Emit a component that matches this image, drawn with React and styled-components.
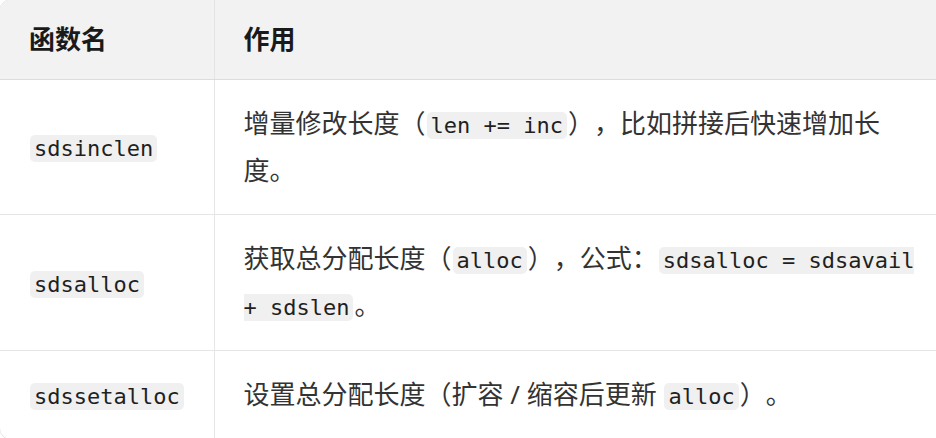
import React from "react";
import styled, { createGlobalStyle } from "styled-components";

const Global = createGlobalStyle`
  html, body {
    margin: 0;
    padding: 0;
    background: #ffffff;
    overflow: hidden;
  }
  body {
    font-family: "Noto Sans", "Noto Sans CJK SC", sans-serif;
  }
`;

const Frame = styled.div`
  width: 955px;
  margin: -1px 0 0 -1px;
  border: 1px solid #e6e6e6;
  border-radius: 12px;
  overflow: hidden;
`;

const Table = styled.table`
  width: 100%;
  border-collapse: collapse;
  table-layout: fixed;
  font-size: 26px;
  line-height: 1.8;
  color: #333333;
  text-spacing-trim: space-all;
  font-feature-settings: "halt" 0, "chws" 0;
`;

const HeadCell = styled.th`
  text-align: left;
  font-weight: 700;
  color: #1a1a1a;
  background: #f2f2f2;
  padding: 16px 29px;
  border-bottom: 1px solid #dcdcdc;
  border-left: ${(p) => (p.$first ? "none" : "1px solid #e4e4e4")};
  width: ${(p) => (p.$first ? "214px" : "auto")};
  box-sizing: border-box;
`;

const Row = styled.tr`
  border-bottom: ${(p) => (p.$last ? "none" : "1px solid #e6e6e6")};
`;

const Cell = styled.td`
  padding: 20px 29px 21px;
  vertical-align: middle;
  border-left: ${(p) => (p.$first ? "none" : "1px solid #e6e6e6")};
`;

const Code = styled.code`
  font-family: "DejaVu Sans Mono", "Liberation Mono", monospace;
  font-size: 22px;
  color: #1f1f1f;
  background: #f0f0f0;
  border-radius: 5px;
  padding: 1px 4px;
  margin: 0 1px;
`;

const rows = [
  {
    name: "sdsinclen",
    desc: (
      <>
        增量修改长度（<Code>len += inc</Code>），比如拼接后快速增加长度。
      </>
    ),
  },
  {
    name: "sdsalloc",
    desc: (
      <>
        获取总分配长度（<Code>alloc</Code>），公式：
        <Code>sdsalloc = sdsavail + sdslen</Code>。
      </>
    ),
  },
  {
    name: "sdssetalloc",
    desc: (
      <>
        设置总分配长度（扩容 / 缩容后更新 <Code>alloc</Code>）。
      </>
    ),
  },
];

export default function App() {
  return (
    <>
      <Global />
      <Frame>
        <Table>
          <thead>
            <tr>
              <HeadCell $first>函数名</HeadCell>
              <HeadCell>作用</HeadCell>
            </tr>
          </thead>
          <tbody>
            {rows.map((r, i) => (
              <Row key={r.name} $last={i === rows.length - 1}>
                <Cell $first>
                  <Code>{r.name}</Code>
                </Cell>
                <Cell>{r.desc}</Cell>
              </Row>
            ))}
          </tbody>
        </Table>
      </Frame>
    </>
  );
}
